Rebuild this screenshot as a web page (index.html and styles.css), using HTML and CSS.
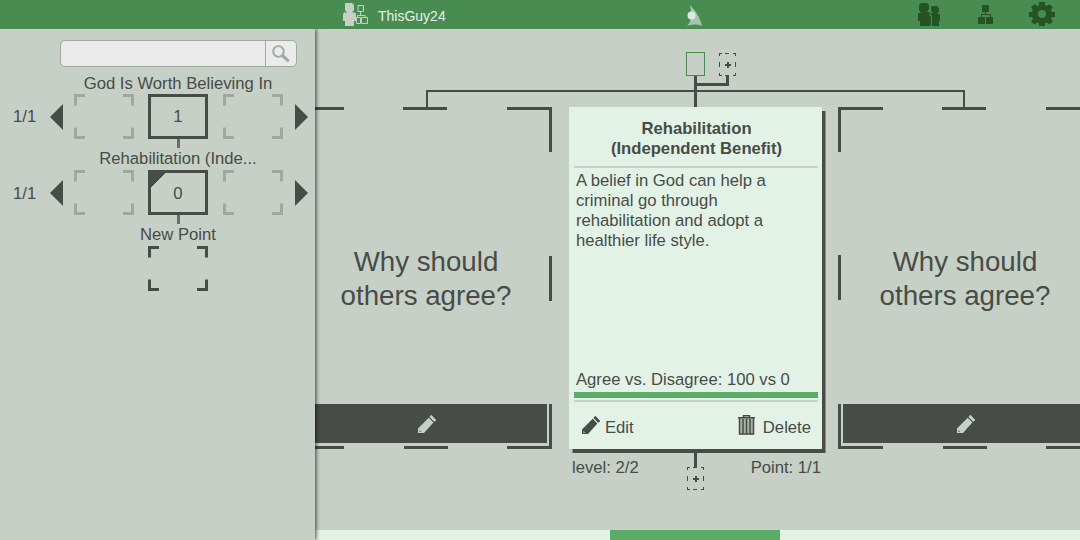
FILE: index.html
```html
<!DOCTYPE html>
<html lang="en">
<head>
<meta charset="utf-8">
<title>Rehabilitation</title>
<link rel="stylesheet" href="styles.css">
</head>
<body>
<svg class="defs" width="0" height="0">
  <defs>
    <symbol id="pencil" viewBox="0 0 18 18">
      <path fill-rule="evenodd" d="M0 18V13.500L10.700 2.800 15.400 7.500 6 18ZM1.400 15.500V16.800H2.800V16.200L2 15.500ZM11.500 2 13 0H13.500L18 4.700V5.500L16.200 6.800Z"/>
    </symbol>
    <symbol id="corners" viewBox="0 0 60 45">
      <path d="M0 0H11V3H3V11.500H0ZM49 0H60V11.500H57V3H49ZM0 33.500H3V42H11V45H0ZM57 33.500H60V45H49V42H57Z"/>
    </symbol>
    <symbol id="add" viewBox="0 0 17 23">
      <path d="M0 0H3V1H1V3H0ZM6 0H10V1H6ZM14 0H17V3H16V1H14ZM0 9H1V14H0ZM16 9H17V14H16ZM0 20H1V22H3V23H0ZM6 22H10V23H6ZM16 20H17V23H14V22H16ZM7.500 9H9.500V11H11.500V13H9.500V15H7.500V13H5.500V11H7.500Z"/>
    </symbol>
  </defs>
</svg>
<header class="topbar">
  <svg class="user-icon" width="28" height="24" viewBox="0 0 28 24">
    <path d="M3.500 0H10L12 2V7L10 9.500H13L14 11V18H12V23H3V18H1V11L2 9.500H5L3 7V1Z" fill="#c6d0c7"/>
    <path d="M16 2.500H21.500V8.500H16ZM18.500 8.500V12.500M15.500 15V12.500H23V15M14.500 14.500H18.500V20.500H14.500ZM19.500 14.500H25.500V20.500H19.500Z" fill="none" stroke="#c6d0c7"/>
  </svg>
  <span class="username">ThisGuy24</span>
  <svg class="logo" width="16" height="22" viewBox="0 0 16 22">
    <path d="M3 0C8 5 13 12 15 21C10 19 6 19 0 21C3 18 4 15 4 9C4 5 3.500 3 3 0Z" fill="#a5c6aa"/>
    <circle cx="4.500" cy="10.500" r="4" fill="#dce9de"/>
  </svg>
  <svg class="people" width="23" height="24" viewBox="0 0 23 24">
    <path d="M3 0H9L11 2V6L9 9H11.500V12L13 14V22.500H11V23H2V18H0V10H3L1 7V2Z"/>
    <path d="M14 3H19L21 5V9L19 11H22V18H21V23H14V13L12 10H15L13 8V4Z"/>
  </svg>
  <svg class="tree" width="16" height="20" viewBox="0 0 16 20">
    <path d="M4 0H11V7H8V9H13V12H15V19H8V12H12V10H4V12H7V19H0V12H3V9H7V7H4Z"/>
  </svg>
  <svg class="gear" width="26" height="24" viewBox="0 0 26 24">
    <path fill-rule="evenodd" d="M10 0H16V3L18 4 20.500 2 24 5.500 22 8 23 10H26V15H23L22 17 24 19.500 20.500 22.500 18 20.500 16 21V24H10V21L8 20.500 5.500 22.500 2 19.500 4 17 3 15H0V10H3L4 8 2 5.500 5.500 2 8 4 10 3ZM13 8A4 4 0 1 0 13 16A4 4 0 1 0 13 8Z"/>
  </svg>
</header>
<div class="layout">
  <aside class="sidebar">
    <div class="search">
      <div class="search-field"></div>
      <button class="search-button" aria-label="Search"><svg width="18" height="18" viewBox="0 0 18 18"><circle cx="6.500" cy="6.500" r="5.300" fill="none" stroke="#a0a8a0" stroke-width="1.800"/><path d="M10.800 10.800 15.800 15.500" stroke="#a0a8a0" stroke-width="3" stroke-linecap="round"/></svg></button>
    </div>
    <div class="level-title">God Is Worth Believing In</div>
    <div class="level">
      <span class="count">1/1</span>
      <span class="arrow left"></span>
      <svg class="slot faded"><use href="#corners"/></svg>
      <div class="slot node">1</div>
      <svg class="slot faded"><use href="#corners"/></svg>
      <span class="arrow right"></span>
    </div>
    <div class="link"></div>
    <div class="level-title">Rehabilitation (Inde...</div>
    <div class="level lower">
      <span class="count">1/1</span>
      <span class="arrow left"></span>
      <svg class="slot faded"><use href="#corners"/></svg>
      <div class="slot node current">0</div>
      <svg class="slot faded"><use href="#corners"/></svg>
      <span class="arrow right"></span>
    </div>
    <div class="link"></div>
    <div class="level-title">New Point</div>
    <svg class="slot new-point"><use href="#corners"/></svg>
  </aside>
  <main class="board">
    <svg class="connectors" width="765" height="78" viewBox="0 0 765 78" shape-rendering="crispEdges">
      <path d="M111 78V61H650V78H648V63H113V78Z"/>
      <path d="M379 47H382V54H411V47H414V57H382V78H379Z"/>
      <rect x="371.500" y="23.500" width="18" height="23" fill="none" stroke="#488c52"/>
      <use href="#add" x="404" y="24" width="17" height="23"/>
    </svg>
    <div class="cards">
      <section class="empty-card">
        <svg class="frame" width="253" height="342" viewBox="0 0 253 342">
          <path d="M0 0H45V3H0ZM104 0H148V3H104ZM208 0H253V45H250V3H208ZM250 149H253V194H250ZM250 297H253V342H208V339H250ZM105 339H149V342H105ZM0 339H45V342H0Z"/>
        </svg>
        <p class="prompt">Why should<br>others agree?</p>
        <div class="edit-bar left-bar"><svg class="pencil"><use href="#pencil"/></svg></div>
      </section>
      <article class="card">
        <h1 class="card-title">Rehabilitation<br>(Independent Benefit)</h1>
        <p class="card-text">A belief in God can help a<br>criminal go through<br>rehabilitation and adopt a<br>healthier life style.</p>
        <div class="votes">Agree vs. Disagree: 100 vs 0</div>
        <div class="vote-bar"></div>
        <div class="actions">
          <span class="action"><svg class="pencil"><use href="#pencil"/></svg>Edit</span>
          <span class="action delete"><svg class="trash" width="17" height="20" viewBox="0 0 17 20"><path d="M1.500 3H15.500V19.500H1.500Z" fill="#a9b3aa"/><path d="M5.500 2V.7H11.500V2M0 2.800H17M1.500 3V19H15.500V3M5 4V19M8.500 4V19M12 4V19" fill="none" stroke="#484c46" stroke-width="1.500"/></svg>Delete</span>
        </div>
      </article>
      <section class="empty-card">
        <svg class="frame" width="253" height="342" viewBox="0 0 253 342">
          <path d="M0 0H45V3H3V45H0ZM104 0H148V3H104ZM208 0H253V3H208ZM0 148H3V193H0ZM0 297H3V339H45V342H0ZM105 339H149V342H105ZM208 339H253V342H208Z"/>
        </svg>
        <p class="prompt">Why should<br>others agree?</p>
        <div class="edit-bar right-bar"><svg class="pencil"><use href="#pencil"/></svg></div>
      </section>
    </div>
    <div class="card-status">
      <span>level: 2/2</span>
      <svg width="17" height="37" viewBox="0 0 17 37" shape-rendering="crispEdges"><path d="M7 0H10V14H7Z"/><use href="#add" y="14" width="17" height="23"/></svg>
      <span>Point: 1/1</span>
    </div>
    <div class="scroll-track"><div class="scroll-thumb"></div></div>
  </main>
</div>
</body>
</html>
```
FILE: styles.css
```css
* { box-sizing: border-box; }
body {
  margin: 0;
  width: 1080px;
  height: 540px;
  overflow: hidden;
  background: #c6d0c7;
  color: #484c46;
  font: 16.67px/20px "Liberation Sans", Arial, sans-serif;
}
svg { display: block; flex: none; fill: #484c46; }
.defs { position: absolute; }
p, h1 { margin: 0; }

.topbar {
  display: grid;
  grid-template-columns: 36px 309px 231px 60px 51px 26px;
  height: 29px;
  padding-left: 342px;
  background: #488c52;
}
.topbar svg { fill: #265324; }
.user-icon, .people { margin-top: 3px; }
.username { padding-top: 6px; color: #e3f2e7; font-size: 14px; }
.logo { margin-top: 5px; }
.tree { margin-top: 5px; }
.gear { margin-top: 2px; }

.layout { display: flex; height: 511px; }
.sidebar {
  position: relative;
  z-index: 1;
  flex: none;
  width: 315px;
  padding-top: 11px;
  background: #c6d0c7;
  box-shadow: 1px 0 4px rgba(0, 0, 0, .7);
  clip-path: inset(0 -8px 0 0);
}
.search {
  display: flex;
  width: 237px;
  height: 27px;
  margin: 0 0 7px 60px;
  border: 1px solid #a0a8a0;
  border-radius: 5px;
  background: #ebebeb;
}
.search-field { flex: 1; }
.search-button {
  width: 31px;
  padding: 0 0 0 6px;
  border: 0;
  border-left: 1px solid #a0a8a0;
  background: none;
}
.level-title { width: 356px; margin-right: -41px; text-align: center; }
.link + .level-title { line-height: 18px; padding-bottom: 2px; }
.level { display: flex; align-items: center; height: 45px; padding-left: 13px; }
.count { width: 37px; }
.arrow {
  width: 13px;
  border: solid transparent;
  border-width: 13px 0;
}
.arrow.left { margin-right: 11px; border-right: 13px solid #484c46; }
.arrow.right { margin-left: -3px; border-left: 13px solid #484c46; }
.slot { flex: none; width: 60px; height: 45px; margin-right: 15px; }
.level .slot:nth-child(3) { margin-right: 14px; }
.faded { fill: #a0a8a0; }
.node { border: 3px solid #484c46; line-height: 39px; text-align: center; }
.lower .count { padding-top: 2px; }
.lower .node { line-height: 41px; }
.current { background: linear-gradient(135deg, #484c46 10px, transparent 10.500px); }
.link { width: 3px; height: 9px; margin: 0 0 2px 177px; background: #686e67; }
.new-point { margin-left: 148px; }

.board {
  display: flex;
  flex: none;
  flex-direction: column;
  width: 765px;
  overflow: hidden;
}
.cards { display: flex; height: 342px; margin-left: -16px; }
.empty-card {
  position: relative;
  display: flex;
  flex: none;
  flex-direction: column;
  width: 253px;
  height: 342px;
  padding-top: 138px;
}
.frame { position: absolute; top: 0; left: 0; }
.prompt { height: 159px; padding-left: 1px; font-size: 27.7px; line-height: 34px; text-align: center; }
.edit-bar {
  display: flex;
  align-items: center;
  justify-content: center;
  height: 39px;
  background: #484c46;
}
.left-bar { margin-right: 5px; padding: 1px 0 0 7px; }
.right-bar { margin-left: 5px; padding: 1px 3px 0 0; }
.pencil { width: 18px; height: 18px; }
.edit-bar .pencil { fill: #c6d0c7; }
.card {
  display: flex;
  flex: none;
  flex-direction: column;
  width: 253px;
  height: 342px;
  margin: 0 16px 0 17px;
  padding: 0 4px 0 5px;
  background: #e3f2e7;
  box-shadow: 3.500px 4px #484c46;
}
.card-title {
  height: 61px;
  padding: 12px 0 0 1px;
  border-bottom: 2px solid #c6d0c7;
  font-size: 16.67px;
  line-height: 20px;
  text-align: center;
}
.card-text { height: 202px; padding: 3px 0 0 2px; }
.votes { height: 22px; padding-left: 2px; }
.vote-bar { height: 6px; background: #5bac67; }
.actions {
  display: flex;
  justify-content: space-between;
  margin-top: 2px;
  padding: 16px 7px 0 8px;
  border-top: 2px solid #c6d0c7;
}
.action { display: flex; gap: 5px; }
.action .pencil { margin-top: -2px; }
.delete { gap: 8px; }
.trash { margin-top: -3px; }
.card-status {
  display: grid;
  grid-template-columns: 115px 17px 117px;
  height: 77px;
  margin: 4px 0 0 257px;
}
.card-status span { padding-top: 5px; }
.card-status span:last-child { text-align: right; }
.scroll-track { height: 10px; background: #e3f2e7; }
.scroll-thumb { width: 170px; height: 10px; margin-left: 295px; background: #5bac67; }
```
